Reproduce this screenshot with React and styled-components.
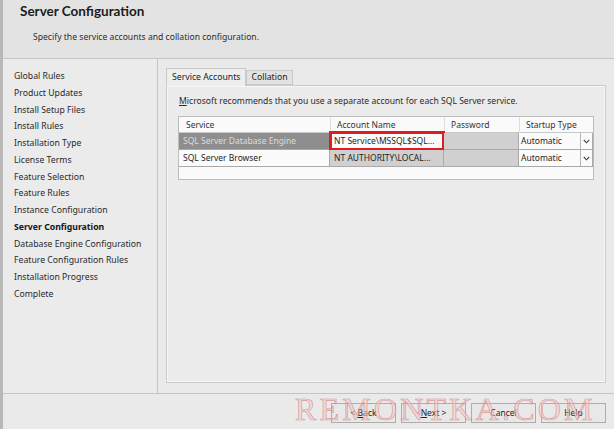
import React from "react";
import styled, { createGlobalStyle } from "styled-components";

const GlobalStyle = createGlobalStyle`
  html, body {
    margin: 0;
    padding: 0;
    background: #eaeaea;
  }
  body {
    font-family: "Noto Sans", "Open Sans", sans-serif;
    color: #262626;
  }
`;

const navItems = [
  "Global Rules",
  "Product Updates",
  "Install Setup Files",
  "Install Rules",
  "Installation Type",
  "License Terms",
  "Feature Selection",
  "Feature Rules",
  "Instance Configuration",
  "Server Configuration",
  "Database Engine Configuration",
  "Feature Configuration Rules",
  "Installation Progress",
  "Complete",
];

const ChevronDown = () => (
  <svg width="7" height="5" viewBox="0 0 7 5">
    <polyline points="0.8,1 3.5,3.8 6.2,1" fill="none" stroke="#444" strokeWidth="1.1" />
  </svg>
);

const App = () => {
  return (
    <>
      <GlobalStyle />
      <Window>
        <Header>
          <Title>Server Configuration</Title>
          <Subtitle>Specify the service accounts and collation configuration.</Subtitle>
        </Header>

        <Main>
          <Nav>
            {navItems.map((item) => (
              <NavItem key={item} $active={item === "Server Configuration"}>
                {item}
              </NavItem>
            ))}
          </Nav>

          <Content>
            <Tabs>
              <Tab $active>Service Accounts</Tab>
              <Tab>Collation</Tab>
            </Tabs>

            <Panel>
              <Hint>
                <u>M</u>icrosoft recommends that you use a separate account for each SQL Server service.
              </Hint>

              <Grid>
                <HeadCell>Service</HeadCell>
                <HeadCell $divider>Account Name</HeadCell>
                <HeadCell $divider>Password</HeadCell>
                <HeadCell $divider>Startup Type</HeadCell>

                <Cell $tone="selected">SQL Server Database Engine</Cell>
                <Cell $tone="white">
                  NT Service\MSSQL$SQL...
                  <Highlight />
                </Cell>
                <Cell $tone="gray" />
                <DropCell>
                  <DropValue>Automatic</DropValue>
                  <DropArrow>
                    <ChevronDown />
                  </DropArrow>
                </DropCell>

                <Cell $tone="white">SQL Server Browser</Cell>
                <Cell $tone="gray">NT AUTHORITY\LOCAL...</Cell>
                <Cell $tone="gray" />
                <DropCell>
                  <DropValue>Automatic</DropValue>
                  <DropArrow>
                    <ChevronDown />
                  </DropArrow>
                </DropCell>

                <Filler />
              </Grid>
            </Panel>
          </Content>
        </Main>

        <Footer>
          <Button>
            &lt; <u>B</u>ack
          </Button>
          <Button>
            <u>N</u>ext &gt;
          </Button>
          <Button>Cancel</Button>
          <Button>Help</Button>
          <Watermark>REMONTKA.COM</Watermark>
        </Footer>
      </Window>
    </>
  );
};

const Window = styled.div`
  width: 611px;
  height: 429px;
  border-left: 3px solid #b8b8b8;
  background: #eaeaea;
  display: grid;
  grid-template-rows: 59px 1fr 35px;
  overflow: hidden;
`;

const Header = styled.header`
  background: #e3e3e3;
  border-bottom: 1px solid #c6c6c6;
  padding: 3px 0 0 17px;
  box-sizing: border-box;
`;

const Title = styled.h1`
  margin: 0;
  font-family: Lato, "Noto Sans", sans-serif;
  font-size: 13.5px;
  line-height: 17px;
  font-weight: 700;
  color: #1c1c1c;
`;

const Subtitle = styled.p`
  margin: 11px 0 0 13px;
  font-size: 8.6px;
  line-height: 12px;
  color: #2c2c2c;
`;

const Main = styled.div`
  display: grid;
  grid-template-columns: 155px 1fr;
  border-bottom: 1px solid #c4c4c4;
  min-height: 0;
`;

const Nav = styled.nav`
  border-right: 1px solid #c6c6c6;
  padding: 9px 0 0 11px;
  background: #ebebeb;
`;

const NavItem = styled.div`
  font-size: 8.7px;
  line-height: 16.75px;
  white-space: nowrap;
  font-weight: ${(p) => (p.$active ? 700 : 400)};
  color: ${(p) => (p.$active ? "#151515" : "#2a2a2a")};
`;

const Content = styled.section`
  display: flex;
  flex-direction: column;
  padding: 9px 8px 10px 8px;
  min-height: 0;
`;

const Tabs = styled.div`
  display: flex;
  align-items: flex-end;
  height: 17px;
  position: relative;
  z-index: 1;
`;

const Tab = styled.div`
  box-sizing: border-box;
  height: ${(p) => (p.$active ? "18px" : "15px")};
  margin-bottom: ${(p) => (p.$active ? "-1px" : "0")};
  padding: 0 ${(p) => (p.$active ? "5px" : "4px")};
  border: 1px solid #c9c9c9;
  border-bottom: ${(p) => (p.$active ? "none" : "1px solid #c9c9c9")};
  background: ${(p) => (p.$active ? "#eeeeee" : "#e2e2e2")};
  font-size: 8.7px;
  line-height: ${(p) => (p.$active ? "16px" : "13px")};
  color: #222;
  white-space: nowrap;
`;

const Panel = styled.div`
  flex: 1;
  border: 1px solid #cbcbcb;
  box-shadow: inset 1px 1px 0 #f7f7f7, inset -1px -1px 0 #f7f7f7;
  background: #ebebeb;
  padding: 9px 11px 0 11px;
`;

const Hint = styled.p`
  margin: 0 0 9px 1px;
  font-size: 8.6px;
  line-height: 12px;
  color: #2a2a2a;
  white-space: nowrap;
`;

const Grid = styled.div`
  display: grid;
  grid-template-columns: 151px 114px 75px 1fr;
  grid-template-rows: 16px 17px 17px 12px;
  border: 1px solid #bcbcbc;
  background: #fafafa;
`;

const HeadCell = styled.div`
  font-size: 8.5px;
  line-height: 15px;
  padding-left: ${(p) => (p.$divider ? "6px" : "7px")};
  border-left: ${(p) => (p.$divider ? "1px solid #dedede" : "none")};
  border-bottom: 1px solid #c8c8c8;
  color: #333;
  white-space: nowrap;
`;

const toneBg = {
  selected: "#8e8e8e",
  white: "#fbfbfb",
  gray: "#d0d0d0",
};

const Cell = styled.div`
  position: relative;
  box-sizing: border-box;
  font-size: 8.5px;
  line-height: 16px;
  padding-left: 4px;
  background: ${(p) => toneBg[p.$tone]};
  color: ${(p) => (p.$tone === "selected" ? "#dcdcdc" : "#1e1e1e")};
  border-right: 1px solid #a9a9a9;
  border-bottom: 1px solid #a9a9a9;
  white-space: nowrap;
  overflow: visible;
`;

const Highlight = styled.span`
  position: absolute;
  top: -2px;
  left: -1px;
  right: -2px;
  bottom: -2px;
  border: 3px solid #e11b22;
  pointer-events: none;
`;

const DropCell = styled.div`
  display: flex;
  box-sizing: border-box;
  background: #fbfbfb;
  border-bottom: 1px solid #a9a9a9;
  border-right: 1px solid #a9a9a9;
`;

const DropValue = styled.div`
  flex: 1;
  font-size: 8.5px;
  line-height: 16px;
  padding-left: 2px;
  color: #1e1e1e;
  border-right: 1px solid #b5b5b5;
`;

const DropArrow = styled.div`
  width: 11px;
  display: flex;
  align-items: center;
  justify-content: center;
`;

const Filler = styled.div`
  grid-column: 1 / -1;
`;

const Footer = styled.footer`
  position: relative;
  display: flex;
  justify-content: flex-end;
  align-items: center;
  gap: 5px;
  padding: 0 8px 0 0;
`;

const Button = styled.button`
  width: 65px;
  height: 20px;
  border: 1px solid #adadad;
  background: #e8e8e8;
  font-family: "Noto Sans", "Open Sans", sans-serif;
  font-size: 8.5px;
  color: #222;
  padding: 0;
  margin-top: 2px;
`;

const Watermark = styled.div`
  position: absolute;
  left: 292px;
  top: -3px;
  font-family: "Liberation Serif", serif;
  font-size: 32px;
  letter-spacing: 3.2px;
  line-height: 36px;
  color: rgba(244, 205, 205, 0.55);
  -webkit-text-stroke: 0.7px rgba(214, 120, 120, 0.7);
  pointer-events: none;
  white-space: nowrap;
`;

export default App;
